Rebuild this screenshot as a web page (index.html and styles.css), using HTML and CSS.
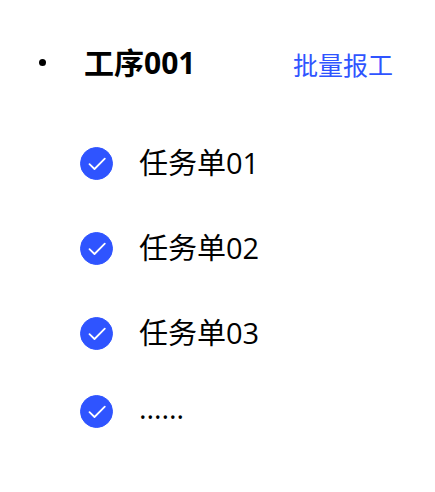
FILE: index.html
```html
<!DOCTYPE html>
<html lang="zh-CN">
<head>
<meta charset="utf-8">
<meta name="viewport" content="width=device-width, initial-scale=1">
<title>工序001</title>
<link rel="stylesheet" href="styles.css">
</head>
<body>
<svg class="symbols" aria-hidden="true">
  <symbol id="tick" viewBox="0 0 33 33">
    <path d="M9.5 17.2L14.5 22L24.8 11.7" fill="none" stroke="currentColor" stroke-width="1.8" stroke-linecap="round" stroke-linejoin="round"/>
  </symbol>
</svg>
<main class="process">
  <header class="process-header">
    <span class="bullet"></span>
    <h1 class="title">工序001</h1>
    <a class="batch" href="#">批量报工</a>
  </header>
  <ul class="tasks">
    <li><label class="task"><span class="check"><input type="checkbox" checked><svg aria-hidden="true"><use href="#tick"/></svg></span><span class="name">任务单01</span></label></li>
    <li><label class="task"><span class="check"><input type="checkbox" checked><svg aria-hidden="true"><use href="#tick"/></svg></span><span class="name">任务单02</span></label></li>
    <li><label class="task"><span class="check"><input type="checkbox" checked><svg aria-hidden="true"><use href="#tick"/></svg></span><span class="name">任务单03</span></label></li>
    <li class="more"><label class="task"><span class="check"><input type="checkbox" checked><svg aria-hidden="true"><use href="#tick"/></svg></span><span class="name">……</span></label></li>
  </ul>
</main>
</body>
</html>
```
FILE: styles.css
```css
* {
  box-sizing: border-box;
}

body {
  margin: 0;
  background: #fff;
  color: #000;
  font-family: "Open Sans", "Noto Sans CJK SC", sans-serif;
  font-size: 29px;
  line-height: 36px;
}

.symbols {
  display: none;
}

.process {
  padding: 44px 42px 0 39px;
}

.process-header {
  display: flex;
  align-items: center;
}

.bullet {
  width: 7px;
  height: 7px;
  margin-right: 38px;
  border-radius: 50%;
  background: #000;
}

.title {
  margin: 0;
  font-size: 30px;
  font-weight: 700;
}

.batch {
  margin-left: auto;
  padding-top: 5px;
  color: #2f54ff;
  font-size: 25px;
  line-height: 32px;
  text-decoration: none;
}

.tasks {
  display: flex;
  flex-direction: column;
  gap: 49px;
  margin: 64px 0 0;
  padding: 0 0 0 41px;
  list-style: none;
}

.more {
  margin-top: -7px;
}

.more .name {
  padding-bottom: 6px;
  line-height: 30px;
}

.task {
  display: flex;
  align-items: center;
  gap: 26px;
}

.check {
  display: grid;
  width: 33px;
  height: 33px;
  color: #fff;
}

.check input,
.check svg {
  grid-area: 1 / 1;
  width: 33px;
  height: 33px;
  margin: 0;
}

.check input {
  appearance: none;
  border: 1px solid #2f54ff;
  border-radius: 50%;
}

.check input:checked {
  background: #2f54ff;
}

.check svg {
  pointer-events: none;
}
```
